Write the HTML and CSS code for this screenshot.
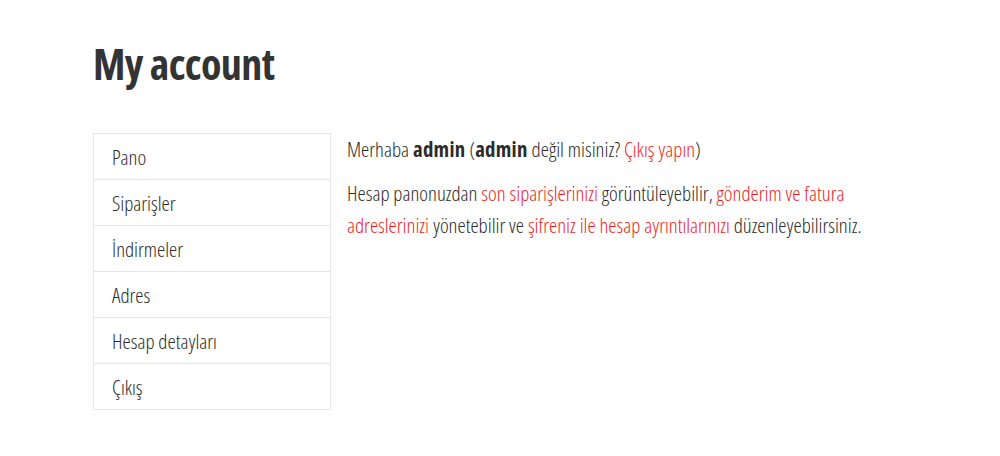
FILE: index.html
```html
<!DOCTYPE html>
<html lang="tr">
<head>
<meta charset="utf-8">
<title>My account</title>
<link rel="stylesheet" href="styles.css">
</head>
<body>
<main class="page">
  <h1 class="title">My account</h1>
  <div class="account">
    <nav class="nav">
      <a class="nav-item" href="#">Pano</a>
      <a class="nav-item" href="#">Siparişler</a>
      <a class="nav-item" href="#">İndirmeler</a>
      <a class="nav-item" href="#">Adres</a>
      <a class="nav-item" href="#">Hesap detayları</a>
      <a class="nav-item" href="#">Çıkış</a>
    </nav>
    <div class="content">
      <p class="hello">Merhaba <strong>admin</strong> (<strong>admin</strong> değil misiniz? <a href="#">Çıkış yapın</a>)</p>
      <p class="intro">Hesap panonuzdan <a href="#">son siparişlerinizi</a> görüntüleyebilir, <a href="#">gönderim ve fatura adreslerinizi</a> yönetebilir ve <a href="#">şifreniz ile hesap ayrıntılarınızı</a> düzenleyebilirsiniz.</p>
    </div>
  </div>
</main>
</body>
</html>
```

FILE: styles.css
```css
html, body {
  margin: 0;
  padding: 0;
  background: #fff;
}
body {
  font-family: "Open Sans", "Noto Sans", sans-serif;
  font-stretch: 75%;
  font-weight: 300;
  color: #2b2b2b;
  font-size: 20.8px;
}
.page {
  padding: 34px 0 0 93px;
}
.title {
  margin: 0;
  font-size: 42px;
  font-weight: 700;
  line-height: 60px;
  letter-spacing: -0.6px;
  color: #333;
}
.account {
  display: flex;
  margin-top: 39px;
  gap: 16px;
}
.nav {
  width: 238px;
  border: 1px solid #e6e6e6;
  box-sizing: border-box;
  display: flex;
  flex-direction: column;
}
.nav-item {
  display: block;
  height: 46px;
  line-height: 46px;
  padding-left: 18px;
  color: #2b2b2b;
  text-decoration: none;
  border-top: 1px solid #e6e6e6;
  box-sizing: border-box;
}
.nav-item:first-child {
  border-top: 0;
  height: 45px;
}
.content {
  width: 540px;
  line-height: 32px;
}
.content p {
  margin: 0;
}
.hello {
  margin-bottom: 12px !important;
}
.content a {
  color: #ec1f1f;
  text-decoration: none;
}
.content strong {
  font-weight: 700;
  letter-spacing: 0.3px;
}
```
